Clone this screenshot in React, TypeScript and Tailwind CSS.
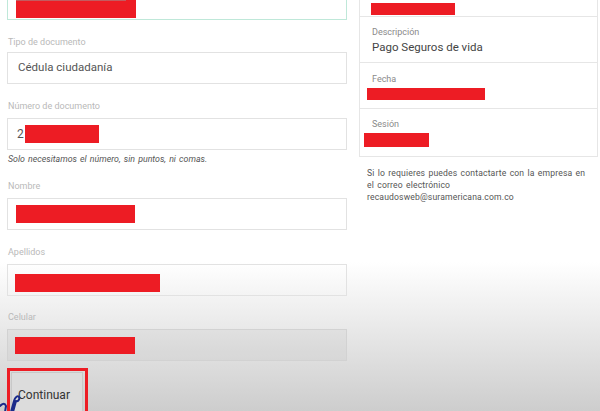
import React from "react";

const Red = ({ w, h, ml = 0, mt = 0 }: { w: number; h: number; ml?: number; mt?: number }) => (
  <div className="bg-[#ed1c24]" style={{ width: w, height: h, marginLeft: ml, marginTop: mt }} />
);

const Label = ({ children, mt }: { children: React.ReactNode; mt: string }) => (
  <div className={`${mt} pl-[1px] text-[9px] leading-[12px] text-[#b9b9b9]`}>{children}</div>
);

export default function App() {
  return (
    <div
      className="relative flex h-[411px] w-[600px] items-start overflow-hidden bg-[linear-gradient(to_bottom,#ffffff_0px,#ffffff_262px,#cdcdcd_411px)]"
      style={{ fontFamily: "Roboto, 'Noto Sans', sans-serif" }}
    >
      {/* Left column */}
      <div className="ml-[7px] w-[340px] shrink-0">
        <div className="-mt-[12px] flex h-[32px] items-end border border-[#bfe8d9] pb-[1px] pl-[8px]">
          <div className="relative">
            <div className="absolute -top-[3px] left-0 h-[4px] w-[110px] bg-[#9a9a9a] opacity-50" />
            <Red w={120} h={18} />
          </div>
        </div>

        <Label mt="mt-[16px]">Tipo de documento</Label>
        <div className="mt-[4px] flex h-[32px] items-center border border-[#e2e2e2] pl-[10px] text-[11.5px] text-[#555]">
          Cédula ciudadanía
        </div>

        <Label mt="mt-[16px]">Número de documento</Label>
        <div className="mt-[6px] flex h-[32px] items-center border border-[#e2e2e2] pl-[9px] text-[12px] text-[#555]">
          <span className="leading-[14px]">2</span>
          <Red w={74} h={18} ml={1} />
        </div>
        <div className="mt-[4px] pl-[1px] text-[8.8px] italic leading-[11px] text-[#555] [word-spacing:1px]">
          Solo necesitamos el número, sin puntos, ni comas.
        </div>

        <Label mt="mt-[15px]">Nombre</Label>
        <div className="mt-[6px] flex h-[32px] items-center border border-[#e2e2e2] pl-[8px]">
          <Red w={119} h={18} />
        </div>

        <Label mt="mt-[16px]">Apellidos</Label>
        <div className="mt-[6px] flex h-[32px] items-center border border-[#e2e2e2] pl-[7px]">
          <Red w={145} h={18} mt={6} />
        </div>

        <Label mt="mt-[15px]">Celular</Label>
        <div className="mt-[6px] flex h-[32px] items-center border border-[#d2d2d2] bg-[#000]/[0.03] pl-[7px]">
          <Red w={120} h={17} />
        </div>

        <div className="mt-[7px] h-[50px] w-[81px] border-[3px] border-[#ed1c24] pl-[1px] pt-[1px]">
          <button className="flex h-[46px] w-[72px] items-start justify-start border border-[#c8c8c8] bg-[#dcdcdc] pl-[6px] pt-[13px] text-[12px] text-[#333]">
            Continuar
          </button>
        </div>
      </div>

      {/* Right column */}
      <div className="ml-[12px] w-[239px] shrink-0">
        <div className="-mt-[31px] border border-[#e6e6e6] bg-white">
          <div className="h-[47px] border-b border-[#e6e6e6] pl-[11px] pt-[33px]">
            <Red w={84} h={12} />
          </div>
          <div className="h-[46px] border-b border-[#e6e6e6] pl-[12px] pt-[9px]">
            <div className="text-[9px] leading-[12px] text-[#8a8a8a]">Descripción</div>
            <div className="mt-[1px] text-[11.5px] leading-[16px] text-[#444]">Pago Seguros de vida</div>
          </div>
          <div className="h-[46px] border-b border-[#e6e6e6] pl-[7px] pt-[10px]">
            <div className="pl-[5px] text-[9px] leading-[12px] text-[#8a8a8a]">Fecha</div>
            <Red w={118} h={12} mt={3} />
          </div>
          <div className="h-[47px] pl-[4px] pt-[9px]">
            <div className="pl-[8px] text-[9px] leading-[12px] text-[#8a8a8a]">Sesión</div>
            <Red w={65} h={14} mt={3} />
          </div>
        </div>
        <div className="mt-[10px] whitespace-nowrap pl-[8px] text-[8.6px] leading-[12px] tracking-[0.15px] text-[#555] [word-spacing:1px]">
          <div>Si lo requieres puedes contactarte con la empresa en</div>
          <div>el correo electrónico</div>
          <div>recaudosweb@suramericana.com.co</div>
        </div>
      </div>

      {/* handwriting annotation */}
      <svg className="absolute left-0 top-[392px]" width="24" height="20" viewBox="0 0 24 20">
        <path
          d="M0 14 C3 11 5 11 6 14 L5 20 M11 20 L14 9 C15 5 18 3 19 5 C20 7 18 10 16 9 M16 9 L13 20"
          fill="none"
          stroke="#1b2a8a"
          strokeWidth="2"
          strokeLinecap="round"
        />
      </svg>
    </div>
  );
}
